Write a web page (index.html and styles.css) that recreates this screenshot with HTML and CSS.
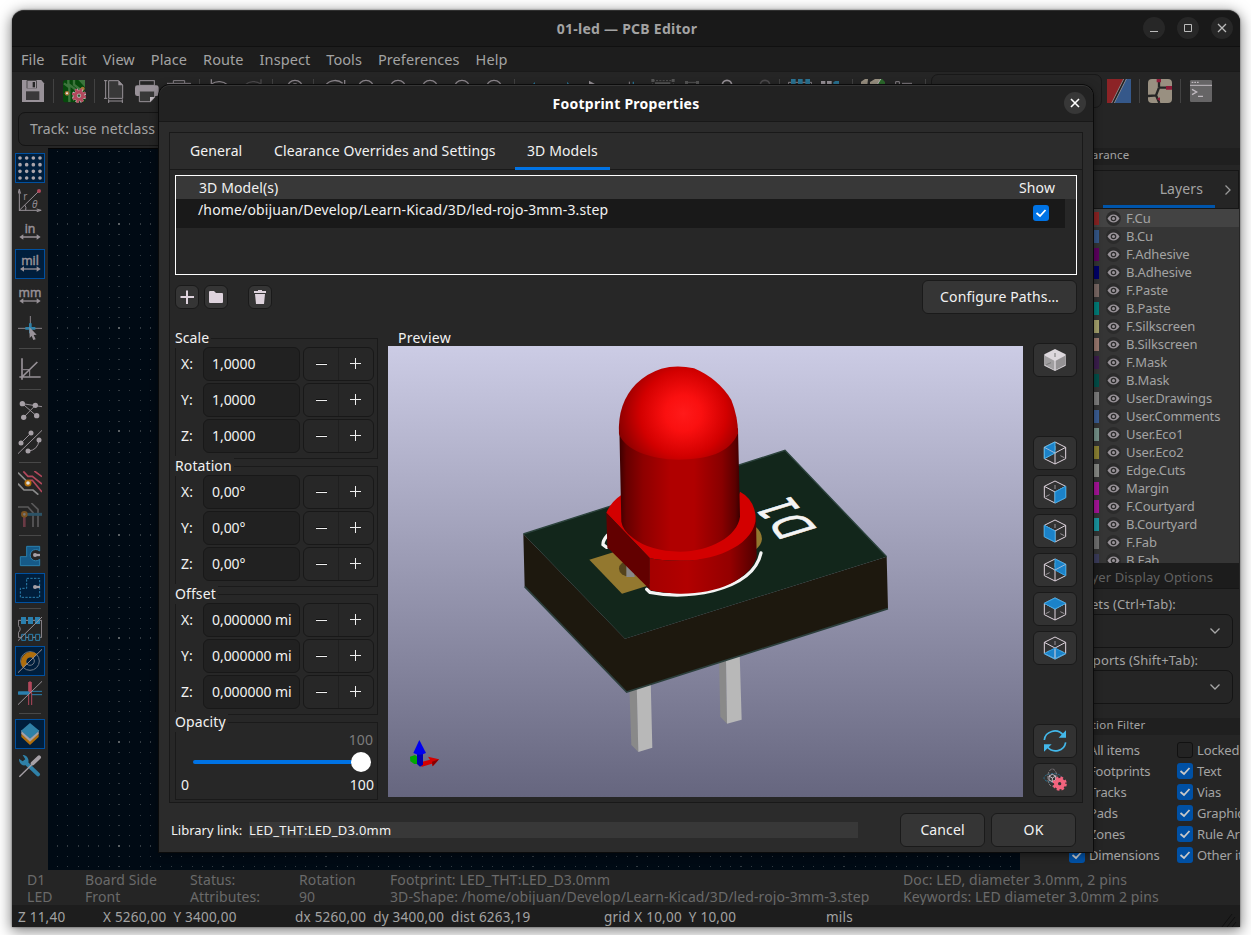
FILE: index.html
```html
<!DOCTYPE html>
<html lang="en">
<head>
<meta charset="utf-8">
<title>01-led — PCB Editor</title>
<link rel="stylesheet" href="styles.css">
</head>
<body>
<svg class="defs" width="0" height="0">
  <symbol id="minus" viewBox="0 0 12 12"><path d="M0 6.500h11" stroke="#eee" fill="none"/><path d="M0 5.500h11" stroke="#111" fill="none"/></symbol>
  <symbol id="plus" viewBox="0 0 12 12"><path d="M0 5.500h11M5.500 0v11" stroke="#eee" fill="none"/></symbol>
  <symbol id="eye" viewBox="0 0 15 15"><circle cx="7.500" cy="7.500" r="7.400" fill="#2b2b2b"/><path d="M1.500 7.500Q4 3.500 7.500 3.500T13.500 7.500Q11 11.500 7.500 11.500T1.500 7.500Z" fill="#9a949a"/><circle cx="7.500" cy="7.500" r="2.800" fill="#2b2b2b"/><circle cx="7.500" cy="7.500" r="1.500" fill="#9a949a"/></symbol>
  <symbol id="chev" viewBox="0 0 12 8"><path d="M1.500 1.500L6 6L10.500 1.500" fill="none" stroke="#a8a8a8" stroke-width="1.300"/></symbol>
  <symbol id="check" viewBox="0 0 16 16"><path d="M3.500 8L7 11L12.500 5" fill="none" stroke="currentColor" stroke-width="1.800"/></symbol>
  <symbol id="cube" viewBox="0 0 72 72"><path d="M36 3L68 19V53L36 69L4 53V19ZM4 19L36 36L68 19M36 36V69" fill="none" stroke="#ded3dd" stroke-width="3"/></symbol>
  <symbol id="hidden" viewBox="0 0 72 72"><path d="M36 15V27M8 50L20 44M64 50L52 44" fill="none" stroke="#9a949a" stroke-width="3"/></symbol>
  <symbol id="lens" viewBox="0 0 72 72"><circle cx="36" cy="27" r="23" fill="none" stroke="#8b858b" stroke-width="4"/></symbol>
</svg>

<div class="window">
  <header class="titlebar">
    <h1>01-led — PCB Editor</h1>
    <div class="winbtns">
      <span><svg width="22" height="22"><path d="M7 14.500h8" stroke="#bbb"/></svg></span>
      <span><svg width="22" height="22"><path d="M7.500 7.500h7v7h-7z" fill="none" stroke="#bbb"/></svg></span>
      <span><svg width="22" height="22"><path d="M7 7l8 8M15 7l-8 8" stroke="#bbb" stroke-width="1.300"/></svg></span>
    </div>
  </header>
  <nav class="menubar"><span>File</span><span>Edit</span><span>View</span><span>Place</span><span>Route</span><span>Inspect</span><span>Tools</span><span>Preferences</span><span>Help</span></nav>

  <div class="toolbar">
    <div class="ic"><svg viewBox="63 237 72 72"><path d="M66 240H124L132 250V306H66Z" fill="#999299"/><rect x="80" y="241" width="30" height="24" fill="#252525"/><rect x="82" y="243" width="26" height="22" fill="#999299"/><rect x="98" y="246" width="7" height="16" fill="#252525"/><rect x="78" y="274" width="40" height="26" fill="#3a383a"/></svg></div>
    <i></i>
    <div class="ic"><svg viewBox="186 237 72 72"><rect x="189" y="240" width="66" height="67" rx="8" fill="#064a0c"/><path d="M192 250L208 262V306M205 240V252L226 268M222 240V254L240 268" stroke="#3c743c" stroke-width="7" fill="none"/><path d="M235 240H255V262Z" fill="#3c743c"/><circle cx="201" cy="280" r="7" fill="#a8743a"/><circle cx="201" cy="280" r="3" fill="#eee"/><circle cx="248" cy="266" r="6" fill="#a8743a"/><circle cx="237" cy="287" r="17" fill="none" stroke="#c3bcc0" stroke-width="9" stroke-dasharray="9 4.350"/><circle cx="237" cy="287" r="17" fill="#c3bcc0"/><circle cx="237" cy="287" r="18" fill="none" stroke="#b2485c" stroke-width="7" stroke-dasharray="7 7.140"/><circle cx="237" cy="287" r="11" fill="none" stroke="#b2485c" stroke-width="10"/><circle cx="237" cy="287" r="5" fill="#2c5a30" stroke="#c3bcc0" stroke-width="2"/></svg></div>
    <i></i>
    <div class="ic"><svg viewBox="309 237 72 72"><path d="M326 242H355L368 255V295H326Z" fill="#383838" stroke="#979197" stroke-width="3"/><path d="M355 240V256H369Z" fill="#979197"/><path d="M317 241V296M312 242H322M312 295H322M325 303H368M326 298V309M367 298V309" stroke="#979197" stroke-width="3" fill="none"/></svg></div>
    <div class="ic"><svg viewBox="405 237 72 72"><rect x="419" y="242" width="44" height="14" fill="#252525" stroke="#979197" stroke-width="3"/><rect x="405" y="256" width="71" height="32" rx="7" fill="#999299"/><path d="M418 273H464V292L452 305H418Z" fill="#383838" stroke="#979197" stroke-width="3"/><path d="M464 291L450 306V291Z" fill="#c0bac0"/></svg></div>
    <div class="ic"><svg viewBox="501 237 72 72"><path d="M501 252V250H572V252M520 249V242H554V249" stroke="#8b858b" stroke-width="3" fill="none"/></svg></div>
    <i></i>
    <div class="ic"><svg viewBox="624 237 72 72"><path d="M634 238V254M634 252C650 241 670 243 682 254" stroke="#8b858b" stroke-width="4" fill="none"/></svg></div>
    <div class="ic"><svg viewBox="720 237 72 72"><path d="M783 238V254M783 252C768 241 748 243 736 254" stroke="#4c4a4c" stroke-width="4" fill="none"/></svg></div>
    <i></i>
    <div class="ic"><svg viewBox="0 0 72 72"><circle cx="42" cy="27" r="23" fill="none" stroke="#8b858b" stroke-width="4"/><circle cx="42" cy="27" r="13" fill="none" stroke="#8b858b" stroke-width="3"/></svg></div>
    <i></i>
    <div class="ic"><svg viewBox="966 237 72 72"><path d="M976 256C990 238 1015 238 1028 250M1034 240V256" stroke="#8b858b" stroke-width="4" fill="none"/></svg></div>
    <div class="ic"><svg><use href="#lens"/></svg></div>
    <div class="ic"><svg><use href="#lens"/></svg></div>
    <div class="ic"><svg><use href="#lens"/></svg></div>
    <div class="ic"><svg><use href="#lens"/></svg></div>
    <div class="ic"><svg><use href="#lens"/></svg></div>
    <i></i>
    <div class="ic"><svg viewBox="309 237 72 72"><path d="M328 262L345 246V262Z" fill="#2a7393"/></svg></div>
    <div class="ic"><svg viewBox="405 237 72 72"><path d="M441 245L457 262H441Z" fill="#2a7393"/></svg></div>
    <div class="ic"><svg viewBox="501 237 72 72"><path d="M507 242L540 260H507Z" fill="#979197"/></svg></div>
    <div class="ic"><svg viewBox="597 237 72 72"><path d="M628 245V260" stroke="#8b858b" stroke-width="3"/><path d="M640 245V260" stroke="#2a7393" stroke-width="4"/></svg></div>
    <div class="ic"><svg viewBox="693 237 72 72"><path d="M698 242H760V262H698Z" fill="none" stroke="#555" stroke-width="3" stroke-dasharray="6 4"/><path d="M694 237h9v9h-9zM755 237h9v9h-9zM705 247h46v8h-46z" fill="#555"/></svg></div>
    <div class="ic"><svg viewBox="789 237 72 72"><path d="M800 247H832" stroke="#555" stroke-width="3"/><path d="M795 243h9v9h-9zM828 243h9v9h-9z" fill="#555"/></svg></div>
    <div class="ic"><svg viewBox="885 237 72 72"><circle cx="921" cy="255" r="14" fill="none" stroke="#979197" stroke-width="5"/></svg></div>
    <div class="ic"><svg viewBox="981 237 72 72"><circle cx="1035" cy="255" r="14" fill="none" stroke="#4c4a4c" stroke-width="5"/></svg></div>
    <i></i>
    <div class="ic"><svg viewBox="1104 237 72 72"><path d="M1105 256V247H1175V256" stroke="#8b858b" stroke-width="3" fill="none"/><path d="M1113 237h14v16h-14zM1134 237h14v16h-14zM1156 237h14v16h-14z" fill="#2a7393"/></svg></div>
    <div class="ic"><svg viewBox="1200 237 72 72"><path d="M1203 243h13v10h-13zM1221 243h14v10h-14z" fill="#979197"/><path d="M1240 254V247L1246 243H1257V254Z" fill="#2a7393"/></svg></div>
    <i></i>
    <div class="ic"><svg viewBox="63 237 72 72"><path d="M63 256V245L75 237H84L82 256ZM90 256V246L105 237H122L112 256Z" fill="#999081"/><path d="M120 237H126L135 246V256H114Z" fill="#2c6a2c"/><path d="M122 237L112 254" stroke="#bbb" stroke-width="3"/></svg></div>
    <div class="ic"><svg viewBox="159 237 72 72"><path d="M167 256V245H178V256M186 250H216" stroke="#8b858b" stroke-width="3" fill="none"/></svg></div>
    <i></i>
    <div class="combo-top"></div>
    <div class="ic"><svg viewBox="801 237 72 72"><rect x="801" y="237" width="72" height="72" fill="#35588a"/><path d="M801 237H852L816 309H801Z" fill="#8c2326"/><path d="M855 237L819 309" stroke="#222" stroke-width="8"/><path d="M851 237L815 309M859 237L823 309" stroke="#b5b0b5" stroke-width="2"/></svg></div>
    <i></i>
    <div class="ic"><svg viewBox="924 237 72 72"><rect x="924" y="237" width="72" height="72" rx="12" fill="#999081"/><path d="M957 237V262M957 263H996M957 263L948 286L924 288M948 286L958 309" stroke="#252525" stroke-width="7" fill="none"/><path d="M950 237h13v10h-13zM978 258h18v11h-18zM950 297L960 292V303Z" fill="#8c1c38"/></svg></div>
    <i></i>
    <div class="ic"><svg viewBox="1047 237 72 72"><rect x="1050" y="240" width="66" height="66" rx="4" fill="#666566"/><path d="M1050 256H1116" stroke="#c0bac0" stroke-width="3"/><path d="M1055 247H1077" stroke="#c0bac0" stroke-width="4" stroke-dasharray="5 3"/><path d="M1056 268L1070 276L1056 284M1074 289H1089" stroke="#c0bac0" stroke-width="4" fill="none"/></svg></div>
  </div>
  <div class="trackbar"><div class="track">Track: use netclass width</div></div>

  <div class="main">
    <aside class="left">
      <div class="ic on"><svg viewBox="54 33 72 72"><path d="M60 39H126M60 59H126M60 79H126M60 99H126" stroke="#aba5ab" stroke-width="11" stroke-linecap="round" stroke-dasharray="0 20" fill="none"/></svg></div>
      <div class="ic"><svg viewBox="54 129 72 72"><path d="M58 198V132M58 196H124M58 196L117 138M54 146L58 133L62 146M110 192L123 196L110 200M74 180Q80 186 77 196" stroke="#979197" stroke-width="3" fill="none"/><circle cx="117" cy="138" r="6" fill="#b2485c"/><text x="70" y="164" class="t30">r</text><text x="96" y="188" class="t30 it">θ</text></svg></div>
      <div class="ic"><svg viewBox="54 225 72 72"><text x="90" y="263" class="t36">in</text><path d="M64 276H116" stroke="#979197" stroke-width="4"/><path d="M58 276L70 268V284ZM122 276L110 268V284Z" fill="#979197"/></svg></div>
      <div class="ic on"><svg viewBox="54 321 72 72"><text x="90" y="360" class="t36">mil</text><path d="M64 372H116" stroke="#979197" stroke-width="4"/><path d="M60 372L72 364V380ZM122 372L110 364V380Z" fill="#979197"/></svg></div>
      <div class="ic"><svg viewBox="54 417 72 72"><text x="90" y="456" class="t36">mm</text><path d="M64 468H116" stroke="#979197" stroke-width="4"/><path d="M58 468L70 460V476ZM122 468L110 460V476Z" fill="#979197"/></svg></div>
      <div class="ic"><svg viewBox="54 513 72 72"><path d="M54 550H126M91 513V550" stroke="#8b858b" stroke-width="3"/><path d="M76 550H106M91 535V565" stroke="#2f81a8" stroke-width="8"/><path d="M88 546L110 569L101 570L107 583L100 585L95 573L89 579Z" fill="#999299"/></svg></div>
      <i></i>
      <div class="ic"><svg viewBox="54 636 72 72"><path d="M66 640V704M58 696H122M66 696L112 651" stroke="#979197" stroke-width="5" fill="none"/><path d="M68 674H89V695" stroke="#979197" stroke-width="3" fill="none"/></svg></div>
      <i></i>
      <div class="ic"><svg viewBox="54 759 72 72"><path d="M67 776L110 813M71 817L106 781M67 776L126 785" stroke="#979197" stroke-width="3"/><g fill="#a6a0a6"><circle cx="67" cy="776" r="8"/><circle cx="106" cy="781" r="8"/><circle cx="71" cy="817" r="8"/><circle cx="110" cy="812" r="8"/></g></svg></div>
      <div class="ic"><svg viewBox="54 855 72 72"><path d="M54 926L126 856M63 894L93 864M84 918Q114 916 117 885" stroke="#979197" stroke-width="3" fill="none"/><g fill="#a6a0a6"><circle cx="63" cy="894" r="7.500"/><circle cx="93" cy="864" r="7.500"/><circle cx="84" cy="918" r="7.500"/><circle cx="117" cy="885" r="7.500"/></g></svg></div>
      <i></i>
      <div class="ic"><svg viewBox="54 3 72 72"><path d="M70 4L84 19H97L126 42M103 3L126 20M88 31H97L126 66" stroke="#b2485c" stroke-width="5" fill="none"/><path d="M54 8L84 38M54 41L72 60H99L115 74" stroke="#8b8b8b" stroke-width="5" fill="none"/><circle cx="84" cy="39" r="8" fill="#ddd" stroke="#b06e0c" stroke-width="5"/></svg></div>
      <div class="ic"><svg viewBox="54 99 72 72"><path d="M54 111H84L99 128V171M94 99L114 118V171" stroke="#5a595a" stroke-width="5" fill="none"/><path d="M73 133V171" stroke="#6a3a44" stroke-width="8"/><path d="M73 133H126" stroke="#2c5265" stroke-width="9"/><circle cx="73" cy="133" r="7" fill="#777" stroke="#7a5220" stroke-width="6"/></svg></div>
      <i></i>
      <div class="ic"><svg viewBox="54 222 72 72"><path d="M80 229H119V243A17 17 0 1 0 119 268V287H61V260H80Z" fill="#165a88" stroke="#2a7fae" stroke-width="3"/><path d="M105 255H120" stroke="#a6a0a6" stroke-width="7"/><circle cx="105" cy="255" r="6" fill="#a6a0a6"/></svg></div>
      <div class="ic on"><svg viewBox="54 318 72 72"><path d="M80 325H119V382H61V355H80Z" fill="none" stroke="#2a7fae" stroke-width="3" stroke-dasharray="7 4"/><path d="M110 340V362" stroke="#001e3c" stroke-width="0"/><path d="M105 351H120" stroke="#a6a0a6" stroke-width="7"/><circle cx="105" cy="351" r="6" fill="#a6a0a6"/></svg></div>
      <i></i>
      <div class="ic"><svg viewBox="54 441 72 72"><path d="M55 451H125V502H55V488Q66 477 55 467Z" fill="none" stroke="#979197" stroke-width="3"/><path d="M63 441h15v21h-15zM84 441h15v21h-15zM105 441h15v21h-15z" fill="#2a7fae"/><path d="M65 493h12v18h-12zM86 493h12v18h-12zM107 493h12v18h-12z" fill="#252525" stroke="#2a7fae" stroke-width="3"/><path d="M54 512L126 441" stroke="#979197" stroke-width="3"/></svg></div>
      <div class="ic on"><svg viewBox="54 537 72 72"><circle cx="90" cy="573" r="28" fill="none" stroke="#6f7884" stroke-width="3"/><circle cx="90" cy="573" r="13" fill="none" stroke="#6f7884" stroke-width="3"/><path d="M69 594A30 30 0 0 1 111 552L99 564A13 13 0 0 0 81 582Z" fill="#b06e0c"/><path d="M54 608L126 538" stroke="#979197" stroke-width="3"/></svg></div>
      <div class="ic"><svg viewBox="54 633 72 72"><path d="M90 633V670M86 669V705M95 669V705" stroke="#b2485c" stroke-width="3"/><path d="M90 636V670" stroke="#b2485c" stroke-width="11"/><path d="M58 669H84" stroke="#2a7fae" stroke-width="11" stroke-linecap="round"/><path d="M96 664H126M96 674H126" stroke="#2a7fae" stroke-width="3"/><path d="M54 704L126 634" stroke="#979197" stroke-width="3"/></svg></div>
      <i></i>
      <div class="ic on"><svg viewBox="54 756 72 72"><path d="M64 789L90 813L116 789V801L90 825L64 801Z" fill="#b06e0c"/><path d="M64 780L90 804L116 780V791L90 815L64 791Z" fill="#a6a0a6"/><path d="M90 759L118 782L90 806L63 782Z" fill="#2f81a8"/></svg></div>
      <div class="ic"><svg viewBox="54 852 72 72"><path d="M76 877L114 913" stroke="#2f81a8" stroke-width="12" stroke-linecap="round"/><path d="M68 855C80 855 88 866 85 878L76 886C66 888 57 880 57 866L68 874L76 868Z" fill="#2f81a8"/><path d="M58 920L98 881" stroke="#a6a0a6" stroke-width="4"/><path d="M98 880L117 862" stroke="#a6a0a6" stroke-width="12" stroke-linecap="round"/></svg></div>
    </aside>

    <div class="board"><svg width="972" height="721"><path id="dots" fill="#333b42"/><path id="major" fill="#5c6266"/></svg></div>

    <aside class="right">
      <div class="caption">Appearance</div>
      <div class="tabs2"><span class="lay">Layers</span><svg width="8" height="12" viewBox="0 0 8 12"><path d="M1.500 1.500L6 6L1.500 10.500" fill="none" stroke="#999" stroke-width="1.300"/></svg></div>
      <ul class="layers">
        <li class="sel"><b class="c-fcu"></b><svg><use href="#eye"/></svg>F.Cu</li>
        <li><b class="c-bcu"></b><svg><use href="#eye"/></svg>B.Cu</li>
        <li><b class="c-fad"></b><svg><use href="#eye"/></svg>F.Adhesive</li>
        <li><b class="c-bad"></b><svg><use href="#eye"/></svg>B.Adhesive</li>
        <li><b class="c-fpa"></b><svg><use href="#eye"/></svg>F.Paste</li>
        <li><b class="c-bpa"></b><svg><use href="#eye"/></svg>B.Paste</li>
        <li><b class="c-fsi"></b><svg><use href="#eye"/></svg>F.Silkscreen</li>
        <li><b class="c-bsi"></b><svg><use href="#eye"/></svg>B.Silkscreen</li>
        <li><b class="c-fma"></b><svg><use href="#eye"/></svg>F.Mask</li>
        <li><b class="c-bma"></b><svg><use href="#eye"/></svg>B.Mask</li>
        <li><b class="c-gry"></b><svg><use href="#eye"/></svg>User.Drawings</li>
        <li><b class="c-com"></b><svg><use href="#eye"/></svg>User.Comments</li>
        <li><b class="c-ec1"></b><svg><use href="#eye"/></svg>User.Eco1</li>
        <li><b class="c-ec2"></b><svg><use href="#eye"/></svg>User.Eco2</li>
        <li><b class="c-edg"></b><svg><use href="#eye"/></svg>Edge.Cuts</li>
        <li><b class="c-mag"></b><svg><use href="#eye"/></svg>Margin</li>
        <li><b class="c-mag"></b><svg><use href="#eye"/></svg>F.Courtyard</li>
        <li><b class="c-bco"></b><svg><use href="#eye"/></svg>B.Courtyard</li>
        <li><b class="c-ffa"></b><svg><use href="#eye"/></svg>F.Fab</li>
        <li><b class="c-bfa"></b><svg><use href="#eye"/></svg>B.Fab</li>
      </ul>
      <div class="ldo">Layer Display Options</div>
      <div class="lbl">Presets (Ctrl+Tab):</div>
      <div class="combo"><svg width="12" height="8"><use href="#chev"/></svg></div>
      <div class="lbl vp">Viewports (Shift+Tab):</div>
      <div class="combo"><svg width="12" height="8"><use href="#chev"/></svg></div>
      <div class="caption filt">Selection Filter</div>
      <div class="filters">
        <label><em class="cb"><svg><use href="#check"/></svg></em>All items</label><label><em class="cb off"></em>Locked items</label>
        <label><em class="cb"><svg><use href="#check"/></svg></em>Footprints</label><label><em class="cb"><svg><use href="#check"/></svg></em>Text</label>
        <label><em class="cb"><svg><use href="#check"/></svg></em>Tracks</label><label><em class="cb"><svg><use href="#check"/></svg></em>Vias</label>
        <label><em class="cb"><svg><use href="#check"/></svg></em>Pads</label><label><em class="cb"><svg><use href="#check"/></svg></em>Graphics</label>
        <label><em class="cb"><svg><use href="#check"/></svg></em>Zones</label><label><em class="cb"><svg><use href="#check"/></svg></em>Rule Areas</label>
        <label><em class="cb"><svg><use href="#check"/></svg></em>Dimensions</label><label><em class="cb"><svg><use href="#check"/></svg></em>Other items</label>
      </div>
    </aside>
  </div>

  <div class="info">
    <span>D1</span><span>Board Side</span><span>Status:</span><span>Rotation</span><span>Footprint: LED_THT:LED_D3.0mm</span><span>Doc: LED, diameter 3.0mm, 2 pins</span>
    <span>LED</span><span>Front</span><span>Attributes:</span><span>90</span><span>3D-Shape: /home/obijuan/Develop/Learn-Kicad/3D/led-rojo-3mm-3.step</span><span>Keywords: LED diameter 3.0mm 2 pins</span>
  </div>
  <footer class="status"><span>Z 11,40</span><span>X 5260,00&ensp;Y 3400,00</span><span>dx 5260,00&ensp;dy 3400,00&ensp;dist 6263,19</span><span>grid X 10,00&ensp;Y 10,00</span><span>mils</span><svg width="18" height="18"><path d="M2 16L12 3M7 16L15 6M12 16L16 11" stroke="#111" stroke-width="1"/></svg></footer>
</div>

<section class="dialog">
  <header class="dtitle"><h2>Footprint Properties</h2><span class="close"><svg width="22" height="22"><path d="M7 7l8 8M15 7l-8 8" stroke="#fff" stroke-width="1.600"/></svg></span></header>
  <div class="notebook">
    <div class="tabs"><span class="t1">General</span><span class="t2">Clearance Overrides and Settings</span><span class="t3 active">3D Models</span></div>
    <div class="page">
      <div class="grid">
        <div class="ghead"><span>3D Model(s)</span><span>Show</span></div>
        <div class="grow"><span>/home/obijuan/Develop/Learn-Kicad/3D/led-rojo-3mm-3.step</span><em class="cb"><svg><use href="#check"/></svg></em></div>
      </div>
      <div class="actions">
        <button class="sq"><svg width="22" height="22"><path d="M4.500 11h13.500M11 4.500v13.500" stroke="#ded3dd" stroke-width="2"/></svg></button>
        <button class="sq"><svg width="22" height="22"><path d="M4 6Q4 5 5 5H9L11 7H17Q18 7 18 8V16Q18 17 17 17H5Q4 17 4 16Z" fill="#ded3dd"/></svg></button>
        <button class="sq gap"><svg width="22" height="22"><path d="M5 5H9V4H13V5H17V7H5ZM6 8H16L15 18H7Z" fill="#ded3dd"/></svg></button>
        <button class="cfg">Configure Paths…</button>
      </div>
      <div class="body">
        <div class="groups">
          <fieldset><legend>Scale</legend>
            <div class="spin"><span>X:</span><div class="val">1,0000</div><div class="pm"><svg><use href="#minus"/></svg><svg><use href="#plus"/></svg></div></div>
            <div class="spin"><span>Y:</span><div class="val">1,0000</div><div class="pm"><svg><use href="#minus"/></svg><svg><use href="#plus"/></svg></div></div>
            <div class="spin"><span>Z:</span><div class="val">1,0000</div><div class="pm"><svg><use href="#minus"/></svg><svg><use href="#plus"/></svg></div></div>
          </fieldset>
          <fieldset><legend>Rotation</legend>
            <div class="spin"><span>X:</span><div class="val">0,00°</div><div class="pm"><svg><use href="#minus"/></svg><svg><use href="#plus"/></svg></div></div>
            <div class="spin"><span>Y:</span><div class="val">0,00°</div><div class="pm"><svg><use href="#minus"/></svg><svg><use href="#plus"/></svg></div></div>
            <div class="spin"><span>Z:</span><div class="val">0,00°</div><div class="pm"><svg><use href="#minus"/></svg><svg><use href="#plus"/></svg></div></div>
          </fieldset>
          <fieldset><legend>Offset</legend>
            <div class="spin"><span>X:</span><div class="val">0,000000 mi</div><div class="pm"><svg><use href="#minus"/></svg><svg><use href="#plus"/></svg></div></div>
            <div class="spin"><span>Y:</span><div class="val">0,000000 mi</div><div class="pm"><svg><use href="#minus"/></svg><svg><use href="#plus"/></svg></div></div>
            <div class="spin"><span>Z:</span><div class="val">0,000000 mi</div><div class="pm"><svg><use href="#minus"/></svg><svg><use href="#plus"/></svg></div></div>
          </fieldset>
          <fieldset class="opacity"><legend>Opacity</legend>
            <div class="cur">100</div>
            <div class="slider"><div class="bar"></div><div class="knob"></div></div>
            <div class="ends"><span>0</span><span>100</span></div>
          </fieldset>
        </div>
        <div class="preview">
          <div class="plabel">Preview</div>
          <svg class="scene" width="635" height="451" viewBox="388 346 635 451">
            <defs>
              <linearGradient id="sky" x1="0" y1="0" x2="0" y2="1"><stop offset="0" stop-color="#cccce5"/><stop offset="1" stop-color="#66667f"/></linearGradient>
              <linearGradient id="cyl" x1="357" x2="720" y1="0" y2="0" gradientUnits="userSpaceOnUse"><stop offset="0" stop-color="#380000"/><stop offset=".06" stop-color="#660000"/><stop offset=".2" stop-color="#8e0000"/><stop offset=".42" stop-color="#b00000"/><stop offset=".62" stop-color="#b00000"/><stop offset=".85" stop-color="#880000"/><stop offset=".96" stop-color="#5c0000"/><stop offset="1" stop-color="#3a0000"/></linearGradient>
              <radialGradient id="dome" cx="550" cy="190" r="215" gradientUnits="userSpaceOnUse"><stop offset="0" stop-color="#ff1a1a"/><stop offset=".25" stop-color="#fa1010"/><stop offset=".6" stop-color="#d20000"/><stop offset=".88" stop-color="#940000"/><stop offset="1" stop-color="#740000"/></radialGradient>
              <linearGradient id="rim" x1="449" x2="770" y1="0" y2="0" gradientUnits="userSpaceOnUse"><stop offset="0" stop-color="#a40000"/><stop offset=".35" stop-color="#b20000"/><stop offset=".75" stop-color="#940000"/><stop offset="1" stop-color="#500000"/></linearGradient>
            </defs>
            <rect x="388" y="346" width="635" height="451" fill="url(#sky)"/>
            <g transform="translate(500 350) scale(.33333)">
              <path d="M388 1010L411 1000L415 1206L394 1185ZM657 930L678 925L681 1121L661 1100Z" fill="#898989"/>
              <path d="M410 1000L452 990L457 1193L415 1206ZM678 925L719 910L725 1109L681 1121Z" fill="#b8b8b8"/>
              <path d="M70 552L375 866L380 1026L74 710ZM375 866L1160 620L1164 776L380 1026Z" fill="#1d180e"/>
              <path d="M74 710L380 1026L1164 776" fill="none" stroke="#2c3f3c" stroke-width="5"/>
              <path d="M70 552L855 301L1160 620L375 866Z" fill="#12261b"/>
              <path d="M70 552L855 301L1160 620" fill="none" stroke="#2c433d" stroke-width="4"/>
              <path d="M268 629L345 605L450 705L366 731Z" fill="#93782f"/>
              <ellipse cx="388" cy="656" rx="31" ry="24" fill="#54431c"/><path d="M379 635H404V681H379Z" fill="#888"/>
              <path d="M764 528Q786 545 786 567Q784 588 764 600Z" fill="#93782f"/>
              <path d="M322 556Q308 572 309 584L320 592M440 718L450 727Q540 745 640 722Q765 690 783 609" fill="none" stroke="#f4f4f4" stroke-width="10" stroke-linecap="round"/>
              <text class="silk" transform="matrix(-.66 -.79 1.550 -.48 955 541)">D1</text>
              <path d="M319 488Q334 454 365 434L400 480H700L720 425Q768 450 768 515C760 600 640 635 540 632Q480 632 449 624Z" fill="#d30000"/>
              <path d="M319 488L449 624V718L322 592Z" fill="#620000"/>
              <path d="M449 624Q490 634 550 632C660 629 765 580 768 500L770 620C750 690 650 732 540 731Q490 730 449 720Z" fill="url(#rim)"/>
              <path d="M358 235L364 515Q368 542 400 565Q450 604 540 605C630 604 712 560 720 500L714 235Z" fill="url(#cyl)"/>
              <path d="M357 252Q352 160 408 102Q440 70 484 56Q530 44 582 55Q655 86 694 150Q714 200 714 250C690 310 620 329 535 329C450 328 375 300 357 252Z" fill="url(#dome)"/>
            </g>
            <g transform="translate(165 560) scale(.33333)">
              <path d="M735 590L750 585L762 594V612L748 612L736 604Z" fill="#00a800"/><path d="M766 607L795 599L789 590L822 598L803 619L801 611L771 620L764 616Z" fill="#d40000"/><path d="M803 619L801 605L822 598Z" fill="#860000"/>
              <path d="M756 578H774V614L765 620L756 612Z" fill="#0000b0"/><path d="M763 540L783 579Q764 590 745 579Z" fill="#0000f0"/>
            </g>
          </svg>
        </div>
        <div class="views">
          <button><svg viewBox="0 0 72 72"><path d="M36 3L68 19V53L36 69L4 53V19Z" fill="#ddd8dd"/><path d="M6 23L34 38V66L6 51Z" fill="#a09ea0"/><path d="M38 38L66 23V51L38 66Z" fill="#949294"/><path d="M36 15V27M10 50L24 44" stroke="#777" stroke-width="3"/></svg></button>
          <button class="b2"><svg viewBox="0 0 72 72"><use href="#hidden"/><use href="#cube"/><path d="M36 3L4 19V53L36 36Z" fill="#1b82c9"/><path d="M4 53V19L36 3V36Z" fill="none" stroke="#4fb4e8" stroke-width="3"/><path d="M4 19L36 36" stroke="#ded3dd" stroke-width="2"/></svg></button>
          <button><svg viewBox="0 0 72 72"><use href="#hidden"/><use href="#cube"/><path d="M36 36L68 19V53L36 69Z" fill="#1b82c9" stroke="#36a4e4" stroke-width="3"/></svg></button>
          <button><svg viewBox="0 0 72 72"><use href="#hidden"/><use href="#cube"/><path d="M4 19L36 36V69L4 53Z" fill="#1b82c9" stroke="#36a4e4" stroke-width="3"/></svg></button>
          <button><svg viewBox="0 0 72 72"><use href="#hidden"/><use href="#cube"/><path d="M36 3L68 19V53L36 36Z" fill="#1b82c9" stroke="#36a4e4" stroke-width="3"/><path d="M36 36L68 19" stroke="#ded3dd" stroke-width="2"/></svg></button>
          <button><svg viewBox="0 0 72 72"><use href="#hidden"/><use href="#cube"/><path d="M36 3L68 19L36 36L4 19Z" fill="#1b82c9" stroke="#36a4e4" stroke-width="3"/></svg></button>
          <button><svg viewBox="0 0 72 72"><use href="#hidden"/><path d="M36 36L68 53L36 69L4 53Z" fill="#1b82c9"/><use href="#cube"/><path d="M36 36L4 53L36 69L68 53Z" fill="none" stroke="#36a4e4" stroke-width="3"/></svg></button>
          <button class="b2"><svg viewBox="0 0 72 72"><path d="M4 33C6 8 42-6 62 20M68 40C64 66 30 76 11 52" fill="none" stroke="#43b8ea" stroke-width="5"/><path d="M69 4V26H47ZM3 68V46H26Z" fill="#43b8ea"/></svg></button>
          <button><svg viewBox="0 0 72 72"><g fill="none" stroke-width="2.500"><ellipse cx="30" cy="30" rx="27" ry="13" stroke="#277a9c" stroke-dasharray="7 3"/><ellipse cx="28" cy="29" rx="14" ry="26" stroke="#8a848a" stroke-dasharray="9 3"/><path d="M28 19L38 24V36L28 41L18 36V24ZM18 24L28 30L38 24M28 30V41" stroke="#ded3dd"/></g><circle cx="50" cy="47" r="18" fill="none" stroke="#f2647e" stroke-width="7" stroke-dasharray="8 6.140"/><circle cx="50" cy="47" r="11" fill="none" stroke="#f2647e" stroke-width="12"/></svg></button>
        </div>
      </div>
    </div>
  </div>
  <div class="dfoot"><span class="ll">Library link:</span><span class="lf">LED_THT:LED_D3.0mm</span><button>Cancel</button><button>OK</button></div>
</section>
<script src="grid.js"></script>
</body>
</html>
```

FILE: styles.css
```css
* { box-sizing: border-box; }
html, body { height: 100%; }
body { margin: 0; padding: 10px 11px 8px 12px; background: #fff; overflow: hidden; font-family: "Noto Sans", "Open Sans", sans-serif; font-size: 14px; letter-spacing: .1px; color: #a3a3a3; }
h1, h2 { margin: 0; font-size: 14px; font-weight: 700; letter-spacing: .25px; }
ul { list-style: none; margin: 0; padding: 0; }
svg { display: block; flex: none; }
.defs { position: absolute; }
button { font: inherit; letter-spacing: inherit; color: inherit; }

.window { display: flex; flex-direction: column; width: 1228px; height: 917px; background: #252525; border-radius: 12px 12px 0 0; overflow: hidden; box-shadow: 0 3px 14px 1px rgba(0,0,0,.5), 0 0 2px rgba(0,0,0,.6); border-top: 1px solid #303030; }
.titlebar { position: relative; flex: none; height: 36px; display: grid; grid-template-columns: 1fr auto 1fr; align-items: center; background: #191919; padding: 0 7px 0 9px; border-bottom: 1px solid #101010; }
.titlebar h1 { grid-column: 2; }
.winbtns { display: flex; justify-content: flex-end; gap: 12px; position: relative; top: -1px; }
.winbtns span { width: 22px; height: 22px; border-radius: 50%; background: #272727; }
.menubar { flex: none; height: 25px; display: flex; gap: 16px; padding-left: 9px; line-height: 25px; background: #1d1d1d; border-bottom: 1px solid #1a1a1a; font-size: 14.500px; letter-spacing: .08px; }
.toolbar { flex: none; height: 38px; display: flex; align-items: center; padding-left: 5px; }
.toolbar .ic { width: 32px; padding: 0 4px; }
.toolbar i { width: 1px; height: 24px; margin: 0 4px; background: #424242; }
.ic svg { width: 24px; height: 24px; }
.combo-top { width: 171px; height: 34px; margin: 0 1px 0 1px; border: 1px solid #181818; border-radius: 7px; }
.trackbar { flex: none; height: 38px; padding: 2px 6px; }
.track { width: 300px; height: 34px; border: 1px solid #141414; border-radius: 7px; padding-left: 11px; line-height: 31px; word-spacing: .500px; }

.main { flex: none; height: 722px; display: flex; }
.left { width: 35px; flex: none; padding-top: 4px; display: flex; flex-direction: column; align-items: center; margin-right: 1px; }
.left .ic { width: 30px; height: 30px; margin: 1px 0; padding: 3px; flex: none; }
.left .on { background: #001e3c; border: 1px solid #0050a0; padding: 2px; }
.left i { width: 22px; height: 1px; margin: 4px 0; background: #484848; flex: none; }
.t30 { font: 30px "Open Sans", sans-serif; fill: #979197; }
.it { font-style: italic; }
.t36 { font: 37px "Open Sans", sans-serif; fill: #979197; text-anchor: middle; stroke: #979197; stroke-width: 1.500px; letter-spacing: 0; }
.board { flex: none; width: 972px; background: #000a14; border-top: 1px solid #050505; }

.right { flex: none; width: 180px; margin-left: 40px; }
.caption { height: 17px; line-height: 14px; padding-left: 3px; font-size: 11.500px; background: #1f1f1f; letter-spacing: .2px; }
.tabs2 { height: 39px; margin: 5px 1px 0 0; border: 1px solid #161616; border-left: 0; display: flex; align-items: center; padding-right: 6px; justify-content: flex-end; gap: 9px; }
.lay { width: 112px; height: 37px; border-bottom: 3px solid #0055ab; line-height: 36px; text-align: right; padding-right: 12px; }
.layers { height: 354px; margin-right: 1px; overflow: hidden; background: #353535; font-size: 13px; letter-spacing: -.12px; }
.layers li { height: 18px; display: flex; align-items: center; line-height: 18px; }
.layers svg { width: 15px; height: 15px; margin: 0 5px 0 7px; }
.layers b { width: 16px; height: 13px; margin-left: 23px; }
.sel { background: #434343; }
.c-fcu { background: #8c2323; } .c-bcu { background: #35588a; } .c-fad { background: #5d0060; } .c-bad { background: #00006a; }
.c-fpa { background: #7c6a66; } .c-bpa { background: #00807c; } .c-fsi { background: #a7a46e; } .c-bsi { background: #9c7a70; }
.c-fma { background: #3c1e4e; } .c-bma { background: #02504a; } .c-gry { background: #808080; } .c-com { background: #3c5f96; }
.c-ec1 { background: #76938b; } .c-ec2 { background: #8f8434; } .c-edg { background: #8a8c88; } .c-mag { background: #a8149b; }
.c-bco { background: #1a99a4; } .c-ffa { background: #727272; } .c-bfa { background: #3c3d5c; }
.ldo { height: 26px; line-height: 28px; margin-right: 1px; padding-left: 17px; background: #1c1c1c; color: #626262; border-bottom: 1px solid #161616; font-size: 13px; letter-spacing: .15px; }
.lbl { height: 25px; line-height: 30px; padding-left: 4px; font-size: 13px; letter-spacing: .1px; white-space: nowrap; }
.vp { height: 22px; line-height: 24px; }
.combo { height: 34px; margin-right: 7px; border: 1px solid #141414; border-radius: 7px; display: flex; justify-content: flex-end; align-items: center; padding-right: 11px; }
.filt { margin-top: 14px; }
.filters { margin-top: 4px; display: grid; grid-template-columns: 108px 90px; overflow: hidden; font-size: 13px; letter-spacing: -.15px; }
.filters label { height: 21px; display: flex; align-items: center; gap: 4px; padding-left: 9px; white-space: nowrap; }
.cb { width: 16px; height: 16px; border-radius: 3px; background: #0050a4; color: #c8c8c8; flex: none; }
.cb svg { width: 16px; height: 16px; }
.off { background: #232323; border: 1px solid #111; }

.info { flex: none; height: 35px; padding: 1px 0 0 15px; display: grid; grid-template-columns: 58px 105px 109px 91px 513px 1fr; grid-auto-rows: 17px; line-height: 17px; color: #6a6a6a; white-space: nowrap; }
.status { position: relative; flex: none; height: 22px; display: grid; grid-template-columns: 85px 192px 309px 222px 1fr 20px; padding-left: 6px; line-height: 24px; background: #1d1d1d; font-size: 13.500px; letter-spacing: .23px; white-space: nowrap; }
.status svg { align-self: end; }

.dialog { position: absolute; left: 159px; top: 85px; width: 934px; height: 767px; display: flex; flex-direction: column; background: #2b2b2b; color: #f2f2f2; border-radius: 11px 11px 0 0; box-shadow: 0 0 0 1px #0b0b0b, 0 2px 8px rgba(0,0,0,.5); border-top: 1px solid #363636; }
.dtitle { height: 36px; flex: none; display: grid; grid-template-columns: 1fr auto 1fr; align-items: center; padding: 0 7px; background: #222; border-radius: 11px 11px 0 0; border-bottom: 1px solid #181818; }
.dtitle h2 { grid-column: 2; color: #fff; }
.close { justify-self: end; width: 22px; height: 22px; border-radius: 50%; background: #373737; position: relative; top: -1px; }
.notebook { margin: 10px 10px 0; height: 671px; border: 1px solid #191919; background: #272727; }
.tabs { height: 37px; display: flex; gap: 8px; padding-left: 8px; background: #2c2c2c; border-bottom: 1px solid #191919; }
.tabs span { height: 37px; line-height: 35px; padding: 0 12px; white-space: nowrap; }
.t1 { width: 76px; } .t2 { width: 245px; } .t3 { width: 95px; }
.tabs .active { border-bottom: 3px solid #0073e5; }
.page { padding: 5px; }
.grid { height: 100px; border: 1px solid #fff; }
.ghead { height: 23px; padding: 0 21px 0 23px; display: flex; justify-content: space-between; line-height: 23px; background: #383838; }
.grow { width: 889px; height: 29px; padding: 0 16px 0 22px; display: flex; justify-content: space-between; background: #191919; letter-spacing: .15px; }
.grow span { line-height: 22px; }
.grow .cb { background: #0073e5; color: #fff; margin-top: 6px; }
.actions { display: flex; align-items: center; height: 34px; margin-top: 5px; }
button { border: 1px solid #1a1a1a; border-radius: 6px; background: #353535; padding: 0; }
.sq { width: 24px; height: 24px; margin-right: 5px; }
.gap { margin-left: 15px; }
.cfg { margin-left: auto; width: 155px; height: 34px; padding-bottom: 2px; letter-spacing: .15px; }
.body { display: flex; }
.groups { width: 203px; padding-top: 14px; }
fieldset { margin: 0; padding: 0; border: 0; height: 128px; position: relative; }
fieldset::before { content: ""; position: absolute; left: 0; top: 10px; right: 0; height: 119px; border: 1px solid #1a1a1a; }
legend { position: relative; padding: 0 2px 0 0; height: 20px; line-height: 20px; background: #272727; float: left; margin-bottom: -1px; }
.spin { position: relative; clear: both; display: flex; height: 34px; margin: 0 4px 2px 6px; line-height: 34px; }
.spin > span { width: 22px; }
.val { width: 97px; border: 1px solid #181818; border-radius: 6px; background: #212121; padding-left: 8px; line-height: 32px; letter-spacing: -.05px; white-space: nowrap; overflow: hidden; }
.pm { width: 71px; margin-left: 3px; border: 1px solid #181818; border-radius: 6px; display: flex; align-items: center; padding-left: 12px; gap: 22px; background: linear-gradient(90deg, transparent 34px, #1f1f1f 34px, #1f1f1f 35px, transparent 35px); }
.pm svg { width: 12px; height: 12px; }
.opacity { height: 86px; }
.opacity::before { height: 76px; }
.cur { position: relative; clear: both; text-align: right; color: #7c7c7c; padding-right: 5px; height: 18px; line-height: 18px; }
.slider { position: relative; display: flex; align-items: center; height: 22px; padding-left: 18px; margin-top: 2px; }
.bar { width: 160px; height: 4px; border-radius: 2px; background: #0073e5; }
.knob { width: 20px; height: 20px; border-radius: 50%; background: #fff; margin-left: -2px; }
.ends { position: relative; display: flex; justify-content: space-between; padding: 0 4px 0 6px; line-height: 24px; }
.preview { margin-left: 10px; padding-top: 14px; }
.plabel { height: 18px; line-height: 20px; padding-left: 10px; letter-spacing: .3px; }
.silk { font: 96px "DejaVu Sans", sans-serif; fill: #f4f4f4; stroke: #f4f4f4; stroke-width: 1.500px; letter-spacing: 0; }
.views { margin-left: 10px; padding-top: 29px; display: flex; flex-direction: column; gap: 5px; }
.views button { width: 44px; height: 34px; padding: 4px 9px; background: #323232; }
.views svg { width: 24px; height: 24px; }
.views .b2 { margin-top: 54px; }
.dfoot { display: flex; align-items: center; height: 34px; margin: 10px 17px 0 12px; }
.ll { width: 78px; font-size: 13px; letter-spacing: 0; white-space: nowrap; }
.lf { width: 609px; height: 16px; line-height: 16px; background: #383838; font-size: 13px; letter-spacing: .22px; margin-right: 42px; }
.dfoot button { width: 85px; height: 34px; margin-right: 6px; padding-bottom: 2px; flex: none; }
.dfoot button:last-child { margin-right: 0; }
```

FILE: grid.js
```js
// Canvas grid: one dot per 10 units, heavier marks on every tenth line.
var step = 10.36, x0 = 119 - 48, y0 = 224 - 149, minor = "", major = "";
for (var i = -6; i < 88; i++) {
  for (var j = -7; j < 63; j++) {
    var x = Math.round(x0 + i * step), y = Math.round(y0 + j * step);
    var mx = i % 10 === 0, my = j % 10 === 0;
    var w = mx ? 2 : 1, h = my ? 2 : 1;
    var d = "M" + (mx ? x - 1 : x) + " " + (my ? y - 1 : y) + "h" + w + "v" + h + "h-" + w + "z";
    if (mx && my) major += d; else minor += d;
  }
}
document.getElementById("dots").setAttribute("d", minor);
document.getElementById("major").setAttribute("d", major);
```
